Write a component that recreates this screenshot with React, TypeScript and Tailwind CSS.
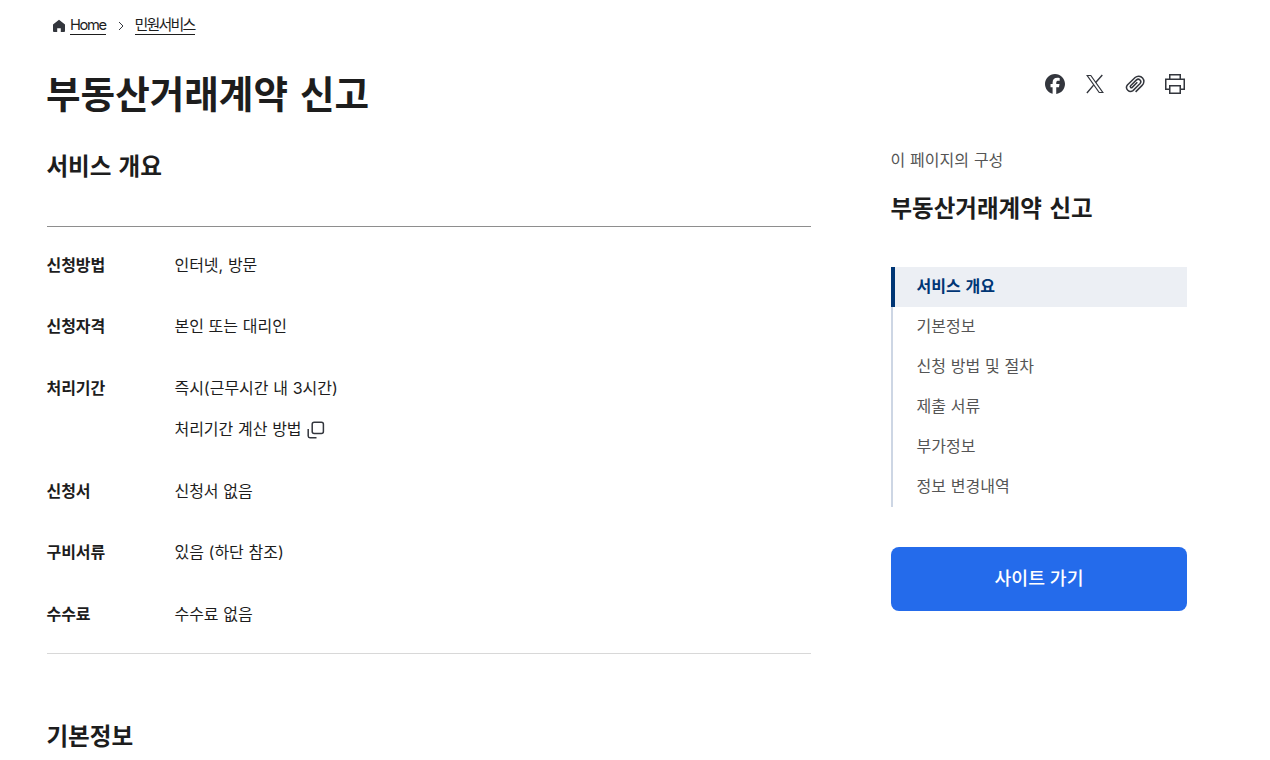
import React from "react";

type Row = { label: string; lines: string[] };

const rows: Row[] = [
  { label: "신청방법", lines: ["인터넷, 방문"] },
  { label: "신청자격", lines: ["본인 또는 대리인"] },
  { label: "처리기간", lines: ["즉시(근무시간 내 3시간)", "처리기간 계산 방법"] },
  { label: "신청서", lines: ["신청서 없음"] },
  { label: "구비서류", lines: ["있음 (하단 참조)"] },
  { label: "수수료", lines: ["수수료 없음"] },
];

const sections = ["기본정보", "신청 방법 및 절차", "제출 서류", "부가정보", "정보 변경내역"];

function HomeIcon() {
  return (
    <svg width="14" height="14" viewBox="0 0 14 14" fill="#33363d" aria-hidden="true">
      <path d="M7 .8 1 5.6V12a.9.9 0 0 0 .9.9h3.3V9.2h3.6v3.7h3.3A.9.9 0 0 0 13 12V5.6L7 .8Z" />
    </svg>
  );
}

function ChevronIcon() {
  return (
    <svg width="8" height="10" viewBox="0 0 8 10" fill="none" stroke="#33363d" aria-hidden="true">
      <path d="m2 1 4 4-4 4" />
    </svg>
  );
}

function FacebookIcon() {
  return (
    <svg width="24" height="24" viewBox="0 0 24 24" fill="#33363d">
      <path d="M22 12.06C22 6.5 17.52 2 12 2S2 6.5 2 12.06c0 4.72 3.23 8.68 7.6 9.77v-6.7H7.53v-3.07H9.6v-1.33c0-3.44 1.55-5.03 4.9-5.03.63 0 1.73.12 2.18.25v2.79c-.24-.03-.65-.04-1.16-.04-1.65 0-2.28.63-2.28 2.26v1.1h3.28l-.56 3.07h-2.72V22C18.21 21.4 22 17.17 22 12.06Z" />
    </svg>
  );
}

function XIcon() {
  return (
    <svg width="24" height="24" viewBox="0 0 24 24" fill="none" stroke="#33363d">
      <path d="M4.2 3.5h3.6l12 17h-3.6L4.2 3.5Z" strokeWidth="1.2" />
      <path d="m19.3 3-6.6 7.5M10.6 13.1 3.9 21" strokeWidth="1.4" />
    </svg>
  );
}

function ClipIcon() {
  return (
    <svg width="24" height="24" viewBox="0 0 24 24" fill="none" stroke="#33363d" strokeWidth="1.5">
      <path d="m12.6 19.9 6.5-6.5a4.95 4.95 0 0 0-7-7.9L4.4 13a4 4 0 0 0 5.6 5.6l7.1-7.1a2.55 2.55 0 0 0-3.6-3.6l-5.9 5.9a1.1 1.1 0 0 0 1.6 1.6l5.1-5.1" />
    </svg>
  );
}

function PrintIcon() {
  return (
    <svg width="24" height="24" viewBox="0 0 24 24" fill="none" stroke="#33363d" strokeWidth="1.5">
      <path d="M6.75 7.25v-4.5h10.5v4.5M6.75 17.25h-4v-10h18.5v10h-4" />
      <path d="M6.75 13.75h10.5v7.5H6.75z" />
    </svg>
  );
}

function WindowIcon() {
  return (
    <svg className="mt-px" width="20" height="20" viewBox="0 0 20 20" fill="none" stroke="#33363d" strokeWidth="1.5">
      <rect x="6.2" y="2.2" width="11.2" height="11.2" rx="2" />
      <path d="M2.2 9v7a1.7 1.7 0 0 0 1.7 1.7h6.6" />
    </svg>
  );
}

export default function App() {
  return (
    <div className="h-[760px] w-[1270px] overflow-hidden bg-white pl-[47px] pr-[83px] font-[Inter,'Noto_Sans_CJK_KR',sans-serif] text-base text-[#1d1d1d]">
      <nav className="flex h-[51px] items-center pl-[5px] text-[15px] tracking-[-1.3px]">
        <HomeIcon />
        <a className="ml-1 mt-px h-[18px] w-9 whitespace-nowrap border-b border-[#1d1d1d] text-[14.7px] leading-[17px] tracking-[-1.4px]">Home</a>
        <span className="ml-[11px] mr-[9.5px]"><ChevronIcon /></span>
        <a className="mt-px h-[18px] w-[60px] whitespace-nowrap border-b border-[#1d1d1d] leading-[15px] tracking-[-1.8px]">민원서비스</a>
      </nav>
      <header className="flex h-[87px] justify-between">
        <h1 className="-ml-px pt-[13px] text-[37.6px] font-bold leading-[61px] [word-spacing:3px]">부동산거래계약 신고</h1>
        <div className="flex gap-4 pt-[21px]">
          <FacebookIcon />
          <XIcon />
          <ClipIcon />
          <PrintIcon />
        </div>
      </header>
      <div className="flex gap-20">
        <main className="w-[764px]">
          <h2 className="-ml-[0.6px] h-[88px] pt-[10px] text-[23.6px] font-bold leading-[38px] [word-spacing:1.5px]">서비스 개요</h2>
          <dl className="flex flex-col gap-9 border-b border-t border-b-[#d8d8d8] border-t-[#8e8e8e] pb-[26px] pt-[25.5px]">
            {rows.map((row) => (
              <div className="-ml-[0.6px] flex leading-[25.5px]" key={row.label}>
                <dt className="w-32 font-bold">{row.label}</dt>
                <dd className="flex flex-col gap-4">
                  {row.lines.map((line, i) => (
                    <div className="flex h-[25.5px] items-center gap-1 [word-spacing:0.2px]" key={line}>
                      <span>{line}</span>
                      {i === 1 && <WindowIcon />}
                    </div>
                  ))}
                </dd>
              </div>
            ))}
          </dl>
          <h2 className="-ml-[0.6px] pt-[64px] text-[23.6px] font-bold leading-[38px]">기본정보</h2>
        </main>
        <aside className="w-[296px]">
          <p className="-ml-[0.5px] pt-[9px] leading-[26px] text-[#555] [word-spacing:0.4px]">이 페이지의 구성</p>
          <p className="-ml-[0.5px] pt-[17px] text-[23.5px] font-bold leading-[38px] [word-spacing:2px]">부동산거래계약 신고</p>
          <ul className="mt-[39px] text-[#555]">
            <li className="h-10 border-l-4 border-[#003675] bg-[#eceff4] pl-[21.5px] font-bold leading-[38px] text-[#003675] [word-spacing:1px]">서비스 개요</li>
            {sections.map((s) => (
              <li className="h-10 border-l-2 border-[#cdd6e4] pl-[23.5px] leading-[38px] [word-spacing:0.3px]" key={s}>{s}</li>
            ))}
          </ul>
          <button className="mt-10 h-16 w-full rounded-lg bg-[#246beb] text-[18.3px] font-medium text-white">사이트 가기</button>
        </aside>
      </div>
    </div>
  );
}
